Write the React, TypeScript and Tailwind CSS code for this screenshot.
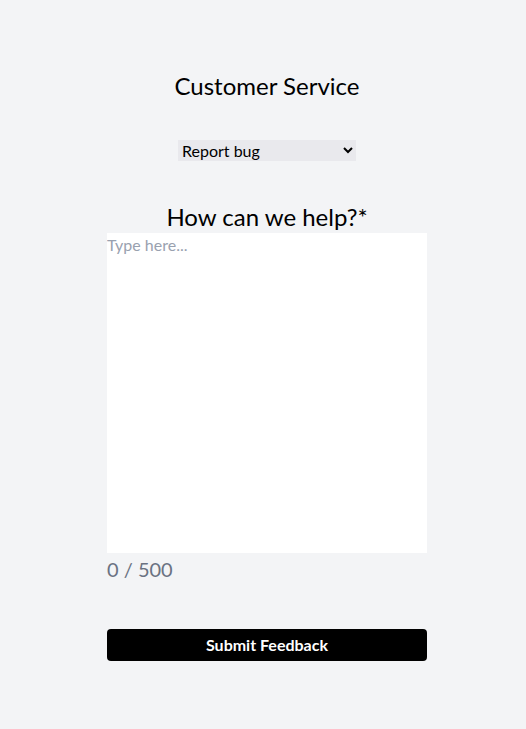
import { useState } from "react"

export default function App() {
  const [text, setText] = useState("")

  return (
    <div className="min-h-[729px] bg-gray-100 pl-2 font-['Lato','Noto_Sans',sans-serif] text-black">
      <div className="mx-auto flex w-[320px] flex-col items-center pt-[70px]">
        <h1 className="text-2xl leading-8">Customer Service</h1>

        <select
          className="mt-[38px] h-[21px] w-[178px] bg-[#e9e9ed] text-base leading-5"
          defaultValue="bug"
        >
          <option value="bug">Report bug</option>
          <option value="feature">Request feature</option>
          <option value="other">Other</option>
        </select>

        <label htmlFor="msg" className="mt-[40px] text-2xl leading-8">
          How can we help?*
        </label>
        <textarea
          id="msg"
          value={text}
          maxLength={500}
          onChange={(e) => setText(e.target.value)}
          placeholder="Type here..."
          className="h-[320px] w-[320px] resize-none bg-white text-base leading-6 placeholder:text-gray-400 focus:outline-none"
        />
        <p className="mt-[2px] self-start text-xl leading-7 text-gray-500">
          {text.length} / 500
        </p>

        <button className="mt-[46px] h-8 w-full rounded bg-black text-base font-bold text-white">
          Submit Feedback
        </button>
      </div>
    </div>
  )
}
